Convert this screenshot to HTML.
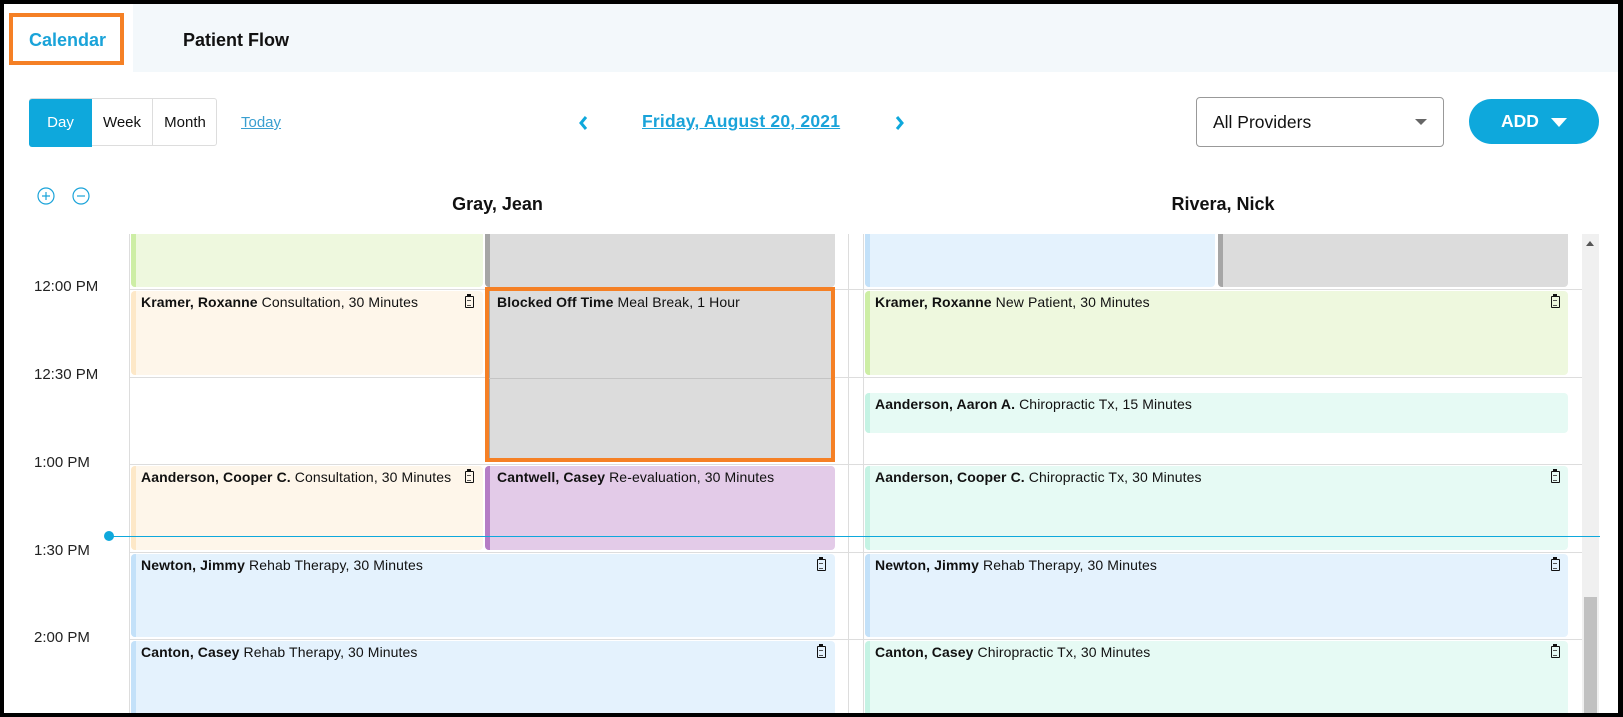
<!DOCTYPE html>
<html style="overflow:hidden;width:1623px;height:717px"><head><meta charset="utf-8"><style>
*{margin:0;padding:0;box-sizing:border-box}
body{width:1623px;height:717px;position:relative;overflow:hidden;background:#fff;font-family:"Liberation Sans",sans-serif;color:#111}
.a{position:absolute}
.ev{position:absolute;border-radius:4px;font-size:14px;padding:3px 0 0 10px;white-space:nowrap;overflow:hidden;letter-spacing:0.1px}
.ev b{font-weight:bold}
.ev::before{content:"";position:absolute;left:0;top:0;bottom:0;width:5px}
.cr{background:#fef6ea}.cr::before{background:#fde8c8}
.gr{background:#eef8de}.gr::before{background:#cdeea5}
.gy{background:#dcdcdc}.gy::before{background:#a6a6a6}
.bl{background:#e4f2fd}.bl::before{background:#c3e1f9}
.pu{background:#e3cbe8}.pu::before{background:#b57dc6}
.mn{background:#e6faf4}.mn::before{background:#c5f3e4}
.ic{position:absolute;top:5px;width:9px;height:12px;border:1.5px solid #111;border-radius:1px}
.ic::before{content:"";position:absolute;left:1px;top:-3px;width:4px;height:3px;background:#111}
.ic::after{content:"";position:absolute;left:1px;top:3px;width:4px;height:4px;border-top:1.5px solid #555;border-bottom:1.5px solid #555}
.hl{position:absolute;height:1px;background:#ddd}
.t{position:absolute;left:34px;font-size:15px;color:#222;width:70px}
#clip{position:absolute;left:0;top:234px;width:1623px;height:483px;overflow:hidden}
</style></head><body>
<!-- tab bar -->
<div class="a" style="left:0;top:0;width:1623px;height:72px;background:#f3f8fb"></div>
<div class="a" style="left:4px;top:4px;width:129px;height:68px;background:#fff"></div>
<div class="a" style="left:9px;top:13px;width:115px;height:52px;border:4px solid #f58025"></div>
<div class="a" style="left:29px;top:30px;font-size:18px;font-weight:bold;color:#1aa3d9">Calendar</div>
<div class="a" style="left:183px;top:30px;font-size:18px;font-weight:bold;color:#111">Patient Flow</div>
<!-- toolbar -->
<div class="a" style="left:29px;top:98px;width:188px;height:48px;border:1px solid #ddd;border-radius:3px"></div>
<div class="a" style="left:29px;top:99px;width:63px;height:48px;background:#0ea8dc;border-radius:3px 0 0 3px;color:#fff;font-size:15px;line-height:48px;text-align:center">Day</div>
<div class="a" style="left:92px;top:99px;width:61px;height:47px;border-right:1px solid #ddd;font-size:15px;line-height:48px;text-align:center">Week</div>
<div class="a" style="left:153px;top:99px;width:64px;height:47px;font-size:15px;line-height:48px;text-align:center">Month</div>
<div class="a" style="left:241px;top:114px;font-size:15px;color:#3a9fd0;text-decoration:underline">Today</div>
<svg class="a" style="left:578px;top:114px" width="12" height="18"><path d="M8 3 L3 9 L8 15" stroke="#0ea8dc" stroke-width="3" fill="none"/></svg>
<div class="a" style="left:642px;top:111px;font-size:17.5px;font-weight:bold;color:#1aa3d9;text-decoration:underline;letter-spacing:0.2px">Friday, August 20, 2021</div>
<svg class="a" style="left:893px;top:114px" width="12" height="18"><path d="M4 3 L9 9 L4 15" stroke="#0ea8dc" stroke-width="3" fill="none"/></svg>
<div class="a" style="left:1196px;top:97px;width:248px;height:50px;border:1px solid #999;border-radius:4px;font-size:17.5px;line-height:48px;padding-left:16px">All Providers</div>
<div class="a" style="left:1415px;top:119px;width:0;height:0;border-left:6px solid transparent;border-right:6px solid transparent;border-top:6px solid #666"></div>
<div class="a" style="left:1469px;top:99px;width:130px;height:45px;background:#0ea8dc;border-radius:23px;color:#fff;font-weight:bold;font-size:17.5px;line-height:45px;padding-left:32px">ADD</div>
<div class="a" style="left:1551px;top:118px;width:0;height:0;border-left:8px solid transparent;border-right:8px solid transparent;border-top:9px solid #fff"></div>
<!-- zoom icons -->
<svg class="a" style="left:37px;top:186px" width="56" height="20"><circle cx="9" cy="10" r="8" stroke="#1aa3d9" fill="none" stroke-width="1.2"/><path d="M5 10H13M9 6V14" stroke="#1aa3d9" stroke-width="1.2"/><circle cx="44" cy="10" r="8" stroke="#1aa3d9" fill="none" stroke-width="1.2"/><path d="M40 10H48" stroke="#1aa3d9" stroke-width="1.2"/></svg>
<div class="a" style="left:129px;width:737px;top:194px;text-align:center;font-weight:bold;font-size:18px">Gray, Jean</div>
<div class="a" style="left:863px;width:720px;top:194px;text-align:center;font-weight:bold;font-size:18px">Rivera, Nick</div>
<!-- times -->
<div class="t" style="top:278px">12:00 PM</div>
<div class="t" style="top:366px">12:30 PM</div>
<div class="t" style="top:454px">1:00 PM</div>
<div class="t" style="top:542px">1:30 PM</div>
<div class="t" style="top:629px">2:00 PM</div>
<div id="clip">
<div class="a" style="left:129px;top:0;width:1px;height:483px;background:#ddd"></div>
<div class="a" style="left:848px;top:0;width:1px;height:483px;background:#ddd"></div>
<div class="a" style="left:863px;top:0;width:1px;height:483px;background:#ddd"></div>
<div class="hl" style="left:129px;width:1454px;top:55px"></div>
<div class="hl" style="left:129px;width:1454px;top:143px"></div>
<div class="hl" style="left:129px;width:1454px;top:230px"></div>
<div class="hl" style="left:129px;width:1454px;top:318px"></div>
<div class="hl" style="left:129px;width:1454px;top:405px"></div>
<div class="a" style="left:1582px;top:0;width:17px;height:483px;background:#f0f0f0"></div>
<div class="a" style="left:1586px;top:7px;width:0;height:0;border-left:4px solid transparent;border-right:4px solid transparent;border-bottom:5px solid #555"></div>
<div class="a" style="left:1584px;top:363px;width:13px;height:120px;background:#c1c1c1"></div>
<div class="ev gr" style="left:131px;top:-8px;width:352px;height:61px"></div>
<div class="ev gy" style="left:485px;top:-8px;width:350px;height:61px"></div>
<div class="ev cr" style="left:131px;top:57px;width:352px;height:84px"><b>Kramer, Roxanne</b> Consultation, 30 Minutes<span class="ic" style="left:334px"></span></div>
<div class="ev gy" style="left:485px;top:57px;width:350px;height:169px;padding-left:12px"><b>Blocked Off Time</b> Meal Break, 1 Hour<div class="a" style="left:0;right:0;top:87px;height:1px;background:#c4c4c4"></div></div>
<div class="a" style="left:485px;top:53px;width:350px;height:175px;border:4px solid #f58025;z-index:5"></div>
<div class="ev cr" style="left:131px;top:232px;width:352px;height:84px"><b>Aanderson, Cooper C.</b> Consultation, 30 Minutes<span class="ic" style="left:334px;background:#fef6ea"></span></div>
<div class="ev pu" style="left:485px;top:232px;width:350px;height:84px;padding-left:12px"><b>Cantwell, Casey</b> Re-evaluation, 30 Minutes</div>
<div class="ev bl" style="left:131px;top:320px;width:704px;height:83px"><b>Newton, Jimmy</b> Rehab Therapy, 30 Minutes<span class="ic" style="left:686px"></span></div>
<div class="ev bl" style="left:131px;top:407px;width:704px;height:90px"><b>Canton, Casey</b> Rehab Therapy, 30 Minutes<span class="ic" style="left:686px"></span></div>
<div class="ev bl" style="left:865px;top:-8px;width:350px;height:61px"></div>
<div class="ev gy" style="left:1218px;top:-8px;width:350px;height:61px"></div>
<div class="ev gr" style="left:865px;top:57px;width:703px;height:84px"><b>Kramer, Roxanne</b> New Patient, 30 Minutes<span class="ic" style="left:686px"></span></div>
<div class="ev mn" style="left:865px;top:159px;width:703px;height:40px"><b>Aanderson, Aaron A.</b> Chiropractic Tx, 15 Minutes</div>
<div class="ev mn" style="left:865px;top:232px;width:703px;height:84px"><b>Aanderson, Cooper C.</b> Chiropractic Tx, 30 Minutes<span class="ic" style="left:686px"></span></div>
<div class="ev bl" style="left:865px;top:320px;width:703px;height:83px"><b>Newton, Jimmy</b> Rehab Therapy, 30 Minutes<span class="ic" style="left:686px"></span></div>
<div class="ev mn" style="left:865px;top:407px;width:703px;height:90px"><b>Canton, Casey</b> Chiropractic Tx, 30 Minutes<span class="ic" style="left:686px"></span></div>
</div>
<!-- now line -->
<div class="a" style="left:109px;top:536px;width:1491px;height:1px;background:#0ea8dc;z-index:6"></div>
<div class="a" style="left:104px;top:531px;width:10px;height:10px;border-radius:50%;background:#0ea8dc;z-index:6"></div>
<!-- frame -->
<div class="a" style="left:0;top:0;width:1623px;height:717px;border:4px solid #000;border-right-width:5px;z-index:50"></div>
</body></html>
